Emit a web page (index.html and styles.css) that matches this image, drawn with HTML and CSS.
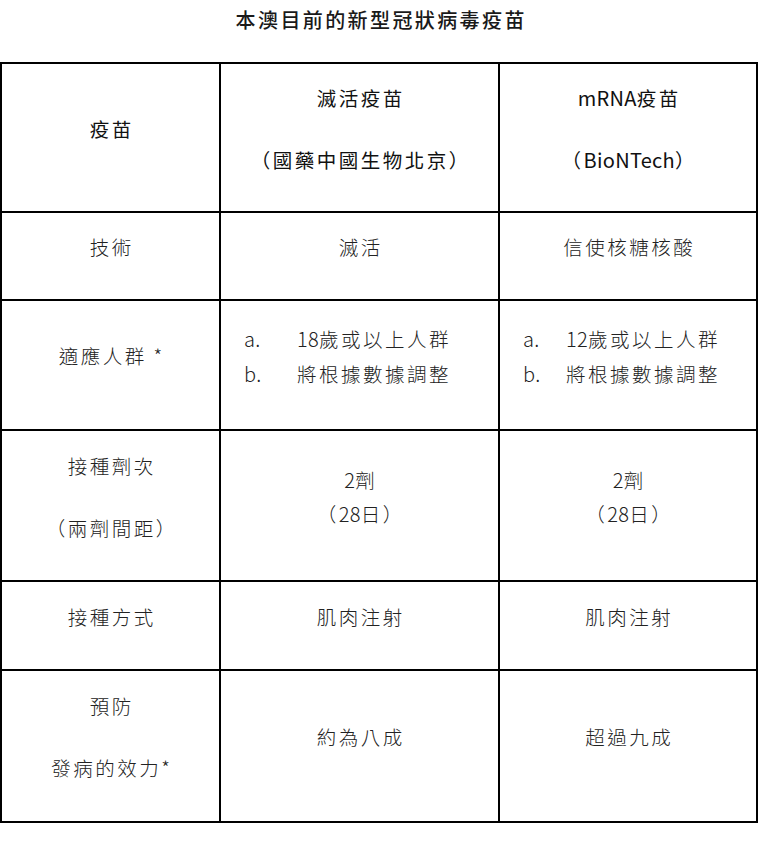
FILE: index.html
```html
<!DOCTYPE html>
<html lang="zh-Hant">
<head>
<meta charset="utf-8">
<title>本澳目前的新型冠狀病毒疫苗</title>
<link rel="stylesheet" href="styles.css">
</head>
<body>
<h1 class="title">本澳目前的新型冠狀病毒疫苗</h1>
<div class="grid">
  <div class="cell head"><p>疫苗</p></div>
  <div class="cell head wide"><p>滅活疫苗</p><p>（國藥中國生物北京）</p></div>
  <div class="cell head wide"><p><span class="lat">mRNA</span>疫苗</p><p>（<span class="lat">BioNTech</span>）</p></div>

  <div class="cell"><p>技術</p></div>
  <div class="cell"><p>滅活</p></div>
  <div class="cell"><p>信使核糖核酸</p></div>

  <div class="cell"><p>適應人群 *</p></div>
  <div class="cell list list-a">
    <div class="li"><span class="mk lat">a.</span><span><span class="lat">18</span>歲或以上人群</span></div>
    <div class="li"><span class="mk lat">b.</span><span>將根據數據調整</span></div>
  </div>
  <div class="cell list list-b">
    <div class="li"><span class="mk lat">a.</span><span><span class="lat">12</span>歲或以上人群</span></div>
    <div class="li"><span class="mk lat">b.</span><span>將根據數據調整</span></div>
  </div>

  <div class="cell wide"><p>接種劑次</p><p>（兩劑間距）</p></div>
  <div class="cell tight"><p><span class="lat">2</span>劑</p><p>（<span class="lat">28</span>日）</p></div>
  <div class="cell tight"><p><span class="lat">2</span>劑</p><p>（<span class="lat">28</span>日）</p></div>

  <div class="cell"><p>接種方式</p></div>
  <div class="cell"><p>肌肉注射</p></div>
  <div class="cell"><p>肌肉注射</p></div>

  <div class="cell wide"><p>預防</p><p>發病的效力*</p></div>
  <div class="cell"><p>約為八成</p></div>
  <div class="cell"><p>超過九成</p></div>
</div>
</body>
</html>
```
FILE: styles.css
```css
html, body {
  margin: 0;
  padding: 0;
  background: #fff;
}
body {
  font-family: "Noto Sans CJK TC", "Noto Sans", sans-serif;
  color: #222;
  width: 760px;
}
.title {
  margin: 0;
  height: 62px;
  line-height: 40px;
  font-size: 20px;
  font-weight: 500;
  letter-spacing: 2.4px;
  text-indent: 2.4px;
  text-align: center;
  color: #1a1a1a;
}
.grid {
  display: grid;
  grid-template-columns: 219px 279px 258px;
  grid-template-rows: 149px 88px 130px 151px 89px 152px;
  border-top: 2px solid #000;
  border-left: 2px solid #000;
  width: 756px;
}
.cell {
  box-sizing: border-box;
  border-right: 2px solid #000;
  border-bottom: 2px solid #000;
  padding: 0 0 18px 0;
  display: flex;
  flex-direction: column;
  justify-content: center;
  align-items: center;
  font-size: 19.5px;
  font-weight: 300;
  letter-spacing: 2.5px;
  line-height: 28px;
  text-align: center;
}
.cell p {
  margin: 0;
  padding-left: 2.5px;
}
.lat {
  font-size: 20px;
  letter-spacing: 0.3px;
}
.head {
  font-weight: 400;
  color: #111;
}
.wide {
  gap: 34px;
}
.tight {
  gap: 6px;
}
.list {
  align-items: stretch;
  gap: 7px;
}
.li {
  display: flex;
  text-align: left;
  padding-left: 23px;
}
.list-a .mk {
  width: 53px;
  flex: none;
}
.list-b .mk {
  width: 43px;
  flex: none;
}
```
